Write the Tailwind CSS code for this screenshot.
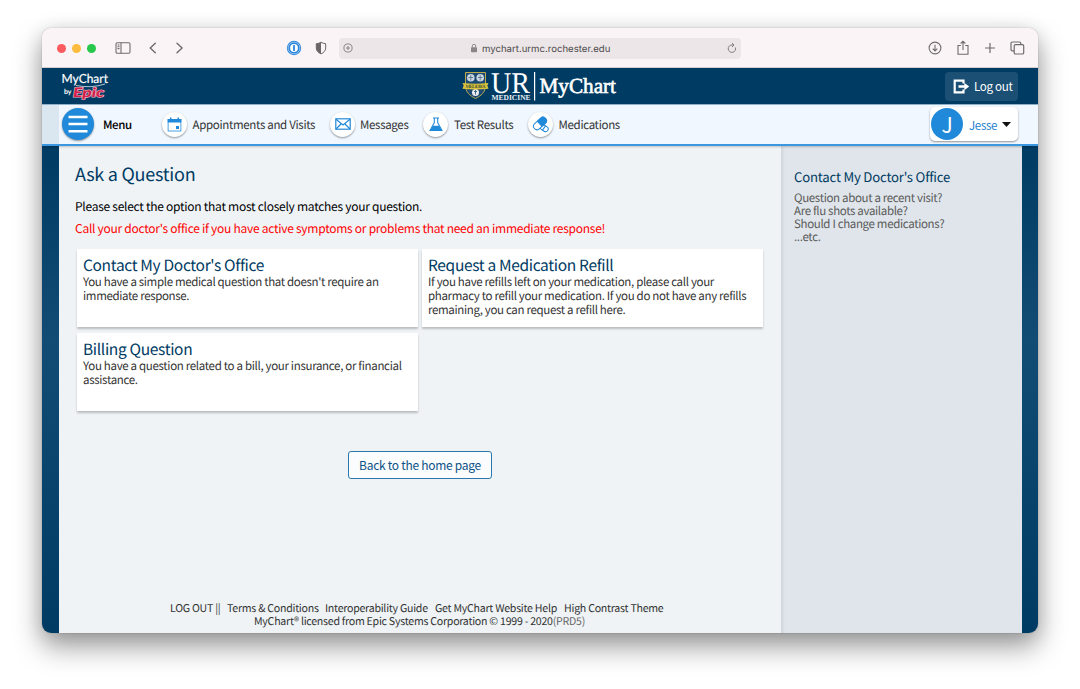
<!DOCTYPE html>
<html lang="en">
<head>
<meta charset="utf-8">
<title>MyChart - Ask a Question</title>
<script src="https://cdn.jsdelivr.net/npm/@tailwindcss/browser@4"></script>
</head>
<body class="h-[689px] w-[1080px] overflow-hidden bg-white pt-[28px] pl-[42px] font-['Noto_Sans_CJK_SC',sans-serif] text-[#333] [text-rendering:geometricPrecision]">
<div class="flex h-[605px] w-[996px] flex-col overflow-hidden rounded-[9px] shadow-[0_0_1px_rgba(0,0,0,0.5),0_14px_28px_rgba(0,0,0,0.38),0_2px_18px_rgba(0,0,0,0.12)]">

  <!-- Browser toolbar -->
  <div class="flex h-[40px] shrink-0 items-center border-b border-[#d3ccd0] bg-[#faf4f6] pt-px pl-[15px]">
    <div class="flex w-[58px] gap-[6px]">
      <span class="size-[9px] rounded-full bg-[#fc5b5f]"></span>
      <span class="size-[9px] rounded-full bg-[#fdbc40]"></span>
      <span class="size-[9px] rounded-full bg-[#28c84c]"></span>
    </div>
    <svg class="w-[16px] shrink-0" height="12" viewBox="0 0 16 12" fill="none" stroke="#6f6b6d" stroke-width="1.1"><rect x="1" y=".8" width="14" height="10.4" rx="1.2"/><path d="M6 .8v10.4M2.5 3h2M2.5 4.8h2M2.5 6.6h2"/></svg>
    <svg class="ml-[17px] shrink-0" width="10" height="14" viewBox="0 0 10 14" fill="none" stroke="#6f6b6d" stroke-width="1.4" stroke-linecap="round" stroke-linejoin="round"><path d="M7.3 2.2L2.2 7l5.100 4.800"/></svg>
    <svg class="ml-[16px] shrink-0" width="10" height="14" viewBox="0 0 10 14" fill="none" stroke="#6f6b6d" stroke-width="1.400" stroke-linecap="round" stroke-linejoin="round"><path d="M3 2.200L8.100 7 3 11.800"/></svg>
    <svg class="ml-[102px] shrink-0" width="16" height="16" viewBox="0 0 16 16"><circle cx="8" cy="8" r="7.200" fill="#2b86dc"/><circle cx="8" cy="8" r="5.900" fill="none" stroke="#b9d6f2" stroke-width=".7"/><circle cx="8" cy="8" r="3.900" fill="#fff"/><rect x="7.100" y="4.900" width="1.800" height="6.200" rx=".5" fill="#2b86dc"/></svg>
    <svg class="ml-[13px] shrink-0" width="12" height="14" viewBox="0 0 12 14"><path d="M6 1.200C4.600 2.200 3 2.600 1.300 2.700V7c0 2.700 2 4.700 4.700 5.900C8.700 11.700 10.700 9.700 10.700 7V2.700C9 2.600 7.400 2.200 6 1.200z" fill="none" stroke="#6a6668" stroke-width="1"/><path d="M6 1.200C4.600 2.200 3 2.600 1.300 2.700V7c0 2.700 2 4.700 4.700 5.900z" fill="#6a6668"/></svg>
    <div class="ml-[12px] flex h-[21px] w-[402px] shrink-0 items-center rounded-[4px] bg-[#ece6e8] pl-[4px]">
      <svg class="shrink-0" width="10" height="10" viewBox="0 0 10 10" fill="none" stroke="#827d7f" stroke-width=".9"><circle cx="5" cy="5" r="4.100"/><path d="M5 3v4M3 5h4"/></svg>
      <svg class="ml-[117px] shrink-0" width="8" height="10" viewBox="0 0 8 10"><rect x="1" y="4.300" width="6" height="4.900" rx=".7" fill="#8a8587"/><path d="M2.300 4.500V3a1.700 1.700 0 013.400 0v1.500" fill="none" stroke="#8a8587" stroke-width=".9"/></svg>
      <span class="ml-[4px] pt-[3px] font-['Inter',sans-serif] text-[9.6px] leading-[14px] text-[#4d4a4b]">mychart.urmc.rochester.edu</span>
      <svg class="mr-[4px] ml-auto shrink-0" width="10" height="12" viewBox="0 0 10 12" fill="none" stroke="#827d7f" stroke-width="1"><path d="M8.400 5.500A3.700 3.700 0 115 3h1.800M5 1l2 2-2 2"/></svg>
    </div>
    <svg class="ml-[187px] shrink-0" width="14" height="14" viewBox="0 0 14 14" fill="none" stroke="#6f6b6d" stroke-width="1.100"><circle cx="7" cy="7" r="5.900"/><path d="M7 3.800v6M4.700 7.600L7 9.900l2.300-2.300"/></svg>
    <svg class="ml-[14px] shrink-0" width="14" height="16" viewBox="0 0 14 16" fill="none" stroke="#6f6b6d" stroke-width="1.100"><path d="M4.800 5.500H2v8.700h10V5.500H9.200M7 10V1.300M4.700 3.500L7 1.200l2.300 2.300"/></svg>
    <svg class="ml-[14px] shrink-0" width="12" height="12" viewBox="0 0 12 12" stroke="#6f6b6d" stroke-width="1.200"><path d="M6 1v10M1 6h10"/></svg>
    <svg class="ml-[14px] shrink-0" width="15" height="14" viewBox="0 0 15 14" fill="none" stroke="#6f6b6d" stroke-width="1.200"><rect x="4.200" y="3.700" width="9.500" height="9.300" rx="1.300"/><path d="M4 9.800H2.300A1.300 1.300 0 011 8.500V2.300A1.300 1.300 0 012.300 1h7.200a1.300 1.300 0 011.300 1.300v1.200"/></svg>
  </div>

  <!-- Brand bar -->
  <header class="flex h-[36px] shrink-0 items-center bg-[#003b63] text-white">
    <svg class="ml-[19px] shrink-0 overflow-visible" width="50" height="32" viewBox="0 0 50 32">
      <text x="0.500" y="13" font-family="Lato, sans-serif" font-size="12.500" fill="#fff" stroke="#fff" stroke-width=".2" textLength="46.500" lengthAdjust="spacingAndGlyphs">MyChart</text>
      <path d="M15 15.500q15 3 29-1.500" fill="none" stroke="#fff" stroke-width=".7"/>
      <text x="3" y="23.500" font-family="Lato, sans-serif" font-size="7" font-weight="700" fill="#fff">by</text>
      <text x="12" y="27" font-family="Lato, sans-serif" font-size="13" font-style="italic" font-weight="900" fill="#d3204b" stroke="#f0b4c4" stroke-width="1.200" paint-order="stroke" textLength="31" lengthAdjust="spacingAndGlyphs">Epic</text>
    </svg>
    <svg class="ml-[350px] shrink-0 overflow-visible" width="156" height="34" viewBox="0 0 156 34">
      <path d="M4.500 3.500h20v13c0 6.500-4.500 10.500-10 13-5.500-2.500-10-6.500-10-13z" fill="#1d4a74" stroke="#b9aa4b" stroke-width="1"/>
      <circle cx="9.800" cy="8.800" r="3.800" fill="#ccd7df"/><circle cx="19.200" cy="8.800" r="3.800" fill="#ccd7df"/><path d="M7.500 8.500h4.600M9.800 6v5.500M17 8.500h4.500M19.200 6v5.500" stroke="#355c7c" stroke-width=".7"/>
      <circle cx="14.500" cy="23.500" r="3.500" fill="#e5ebee"/><path d="M14.500 21v4.500M13 22.500h3" stroke="#355c7c" stroke-width=".9"/>
      <path d="M1.500 14q13 1.500 26 0l-1.200 2.500 1.200 3.200q-13 1.500-26 0l1.200-3.200z" fill="#dcc43a"/>
      <text x="4.500" y="18.900" font-family="Liberation Serif, serif" font-size="5" font-weight="700" fill="#4b5a3a" textLength="20">MELIORA</text>
      <text x="30" y="23.500" font-family="Liberation Serif, serif" font-size="30" fill="#fff" textLength="39" lengthAdjust="spacingAndGlyphs">UR</text>
      <text x="30.500" y="31.300" font-family="Liberation Serif, serif" font-size="7.500" font-weight="700" fill="#e8eef3" textLength="39" lengthAdjust="spacingAndGlyphs">MEDICINE</text>
      <path d="M73.600 3v28.500" stroke="#fff" stroke-width="1.200"/>
      <text x="78.500" y="24" font-family="Liberation Serif, serif" font-size="21.500" fill="#fff" stroke="#fff" stroke-width=".6" textLength="76.500" lengthAdjust="spacingAndGlyphs">MyChart</text>
    </svg>
    <button class="mr-[20px] ml-auto flex h-[29px] w-[73px] items-center rounded-[4px] bg-[#1b4f74] pl-[8px] text-[11.6px] leading-[16px] tracking-[-0.32px]">
      <svg class="shrink-0" width="17" height="15" viewBox="0 0 17 15"><path d="M10.500 4.500V1.700H1.700v11.600h8.800v-2.800" fill="none" stroke="#fff" stroke-width="2.200"/><path d="M5.500 6.300h5.800V3.700l4.900 3.800-4.900 3.800V8.700H5.500z" fill="#fff"/></svg>
      <span class="ml-[4px] pb-px whitespace-nowrap">Log out</span>
    </button>
  </header>

  <!-- Navigation -->
  <nav class="relative z-10 flex h-[42px] shrink-0 items-center border-t border-b-2 border-t-[#8fb0cb] border-b-[#3b97e0] bg-linear-to-r from-[#dae6f0] from-[17px] to-[#f0f7ff] to-[17px] pb-px text-[11.5px] leading-[16px] tracking-[-0.32px] shadow-[0_1px_2px_rgba(0,0,0,0.2)]">
    <div class="ml-[20px] flex w-[100px] shrink-0 items-center">
      <span class="flex size-[32px] shrink-0 items-center justify-center rounded-full bg-[#2189d9] shadow-[0_1px_2px_rgba(0,0,0,0.4)]">
        <svg width="20" height="20" viewBox="0 0 20 20" stroke="#fff" stroke-width="2.400"><path d="M.5 3h19M.5 10h19M.5 17.300h19"/></svg>
      </span>
      <span class="ml-[9px] pt-px font-medium tracking-[-0.45px] text-black">Menu</span>
    </div>
    <div class="flex w-[168px] shrink-0 items-center">
      <span class="flex size-[25px] shrink-0 items-center justify-center rounded-full bg-white shadow-[0_1px_2px_rgba(0,0,0,0.4)]">
        <svg width="15" height="15" viewBox="0 0 15 15"><path d="M.7 2h13.600v3.500H.7zM3 .5h1.500V2H3zM10.500.5H12V2h-1.500z" fill="#2189d9"/><rect x="1.100" y="2.500" width="12.800" height="11.500" fill="none" stroke="#2189d9" stroke-width=".8"/><rect x="9" y="9" width="3" height="3" fill="#2189d9"/></svg>
      </span>
      <span class="ml-[5.5px] pt-px whitespace-nowrap">Appointments and Visits</span>
    </div>
    <div class="flex w-[93px] shrink-0 items-center">
      <span class="flex size-[25px] shrink-0 items-center justify-center rounded-full bg-white shadow-[0_1px_2px_rgba(0,0,0,0.4)]">
        <svg width="16" height="12" viewBox="0 0 16 12" fill="none" stroke="#2189d9" stroke-width="1.200"><rect x=".8" y=".8" width="14.400" height="10.400"/><path d="M1 1.200l7 5.800 7-5.800M1 11l5-5M15 11l-5-5"/></svg>
      </span>
      <span class="ml-[5px] pt-px">Messages</span>
    </div>
    <div class="flex w-[105px] shrink-0 items-center">
      <span class="flex size-[25px] shrink-0 items-center justify-center rounded-full bg-white shadow-[0_1px_2px_rgba(0,0,0,0.4)]">
        <svg width="14" height="15" viewBox="0 0 14 15"><path d="M4 1h6M5.300 1v4.700L1 13.500h12L8.700 5.700V1" fill="none" stroke="#2189d9" stroke-width="1.100"/><path d="M4 8.800h6l2.700 4.500H1.300z" fill="#2189d9"/></svg>
      </span>
      <span class="ml-[6px] pt-px whitespace-nowrap">Test Results</span>
    </div>
    <div class="flex w-[100px] shrink-0 items-center">
      <span class="flex size-[25px] shrink-0 items-center justify-center rounded-full bg-white shadow-[0_1px_2px_rgba(0,0,0,0.4)]">
        <svg width="17" height="17" viewBox="0 0 17 17" stroke="#2189d9" stroke-width="1"><g transform="rotate(35 12 12)"><rect x="7.500" y="9.400" width="9" height="5.200" rx="2.600" fill="#fff"/><path d="M12 9.400v5.200"/></g><g transform="rotate(-42 8 7.500)"><rect x=".5" y="4.100" width="15" height="6.800" rx="3.400" fill="#fff"/><path d="M7.500 4.100h4.600a3.400 3.400 0 010 6.800H7.500z" fill="#2189d9"/></g></svg>
      </span>
      <span class="ml-[5.5px] pt-px">Medications</span>
    </div>
    <button class="mr-[20px] ml-auto flex h-[34px] w-[88px] shrink-0 items-center rounded-[5px] bg-white pl-[1px] shadow-[0_1px_2px_rgba(0,0,0,0.4)]">
      <span class="flex size-[32px] shrink-0 items-center justify-center rounded-full bg-[#2189d9] text-[21px] text-white">J</span>
      <span class="ml-[6px] pt-px text-[#1b80cc]">Jesse</span>
      <svg class="mt-px ml-[5px]" width="9" height="5" viewBox="0 0 9 5"><path d="M0 0h9L4.500 5z" fill="#111"/></svg>
    </button>
  </nav>

  <!-- Page -->
  <div class="flex min-h-0 flex-1 bg-linear-to-b from-[#003b63] via-[#124c75] via-40% to-[#003b63] pr-[16px] pl-[17px]">
    <main class="flex w-[722px] shrink-0 flex-col bg-[#eff3f6] pl-[16px]">
      <h1 class="mt-[16px] text-[18px] leading-[24px] tracking-[-0.25px] text-[#003b63]">Ask a Question</h1>
      <p class="mt-[13px] text-[12px] leading-[16px] tracking-[-0.265px] text-black">Please select the option that most closely matches your question.</p>
      <p class="mt-[6px] text-[12px] leading-[16px] tracking-[-0.265px] text-[#f00]">Call your doctor's office if you have active symptoms or problems that need an immediate response!</p>
      <div class="mt-[12px] ml-[2px] grid grid-cols-[341px_341px] gap-x-[4px] gap-y-[6px]">
        <a class="h-[78px] bg-white px-[6px] pt-[6px] whitespace-nowrap shadow-[0_2px_2px_rgba(0,0,0,0.22)]">
          <h2 class="text-[15.5px] leading-[20px] tracking-[-0.33px] text-[#003b63]">Contact My Doctor's Office</h2>
          <p class="text-[11.5px] leading-[14.2px] tracking-[-0.34px]">You have a simple medical question that doesn't require an<br>immediate response.</p>
        </a>
        <a class="h-[78px] bg-white px-[6px] pt-[6px] whitespace-nowrap shadow-[0_2px_2px_rgba(0,0,0,0.22)]">
          <h2 class="text-[15.5px] leading-[20px] tracking-[-0.33px] text-[#003b63]">Request a Medication Refill</h2>
          <p class="text-[11.5px] leading-[14.2px] tracking-[-0.33px]">If you have refills left on your medication, please call your<br>pharmacy to refill your medication. If you do not have any refills<br>remaining, you can request a refill here.</p>
        </a>
        <a class="h-[78px] bg-white px-[6px] pt-[6px] whitespace-nowrap shadow-[0_2px_2px_rgba(0,0,0,0.22)]">
          <h2 class="text-[15.5px] leading-[20px] tracking-[-0.33px] text-[#003b63]">Billing Question</h2>
          <p class="text-[11.5px] leading-[14.2px] tracking-[-0.32px]">You have a question related to a bill, your insurance, or financial<br>assistance.</p>
        </a>
      </div>
      <button class="mt-[40px] ml-[273px] h-[28px] w-[144px] rounded-[3px] border border-[#2a76ad] bg-[#fbfcfd] text-[12px] leading-[16px] tracking-[-0.28px] whitespace-nowrap text-[#0b5288]">Back to the home page</button>
      <footer class="mt-auto mb-[5px] text-[10.6px] leading-[13px] tracking-[-0.25px]">
        <div class="flex pl-[95px] whitespace-nowrap"><span class="w-[57px]">LOG OUT ||</span><span class="w-[98px]">Terms &amp; Conditions</span><span class="w-[110px]">Interoperability Guide</span><span class="w-[129px]">Get MyChart Website Help</span><span>High Contrast Theme</span></div>
        <div class="pl-[179px] whitespace-nowrap">MyChart® licensed from Epic Systems Corporation © 1999 - 2020<span class="text-[#666]">(PRD5)</span></div>
      </footer>
    </main>
    <aside class="w-[241px] shrink-0 bg-[#dfe5ea] pl-[13px] shadow-[inset_3px_0_3px_-1px_rgba(0,0,0,0.07)]">
      <h2 class="mt-[22px] text-[13.2px] leading-[18px] tracking-[-0.2px] text-[#003b63]">Contact My Doctor's Office</h2>
      <p class="mt-[6px] text-[11.5px] leading-[13px] tracking-[-0.34px] text-[#5b5b5b]">Question about a recent visit?<br>Are flu shots available?<br>Should I change medications?<br>...etc.</p>
    </aside>
  </div>
</div>
</body>
</html>
